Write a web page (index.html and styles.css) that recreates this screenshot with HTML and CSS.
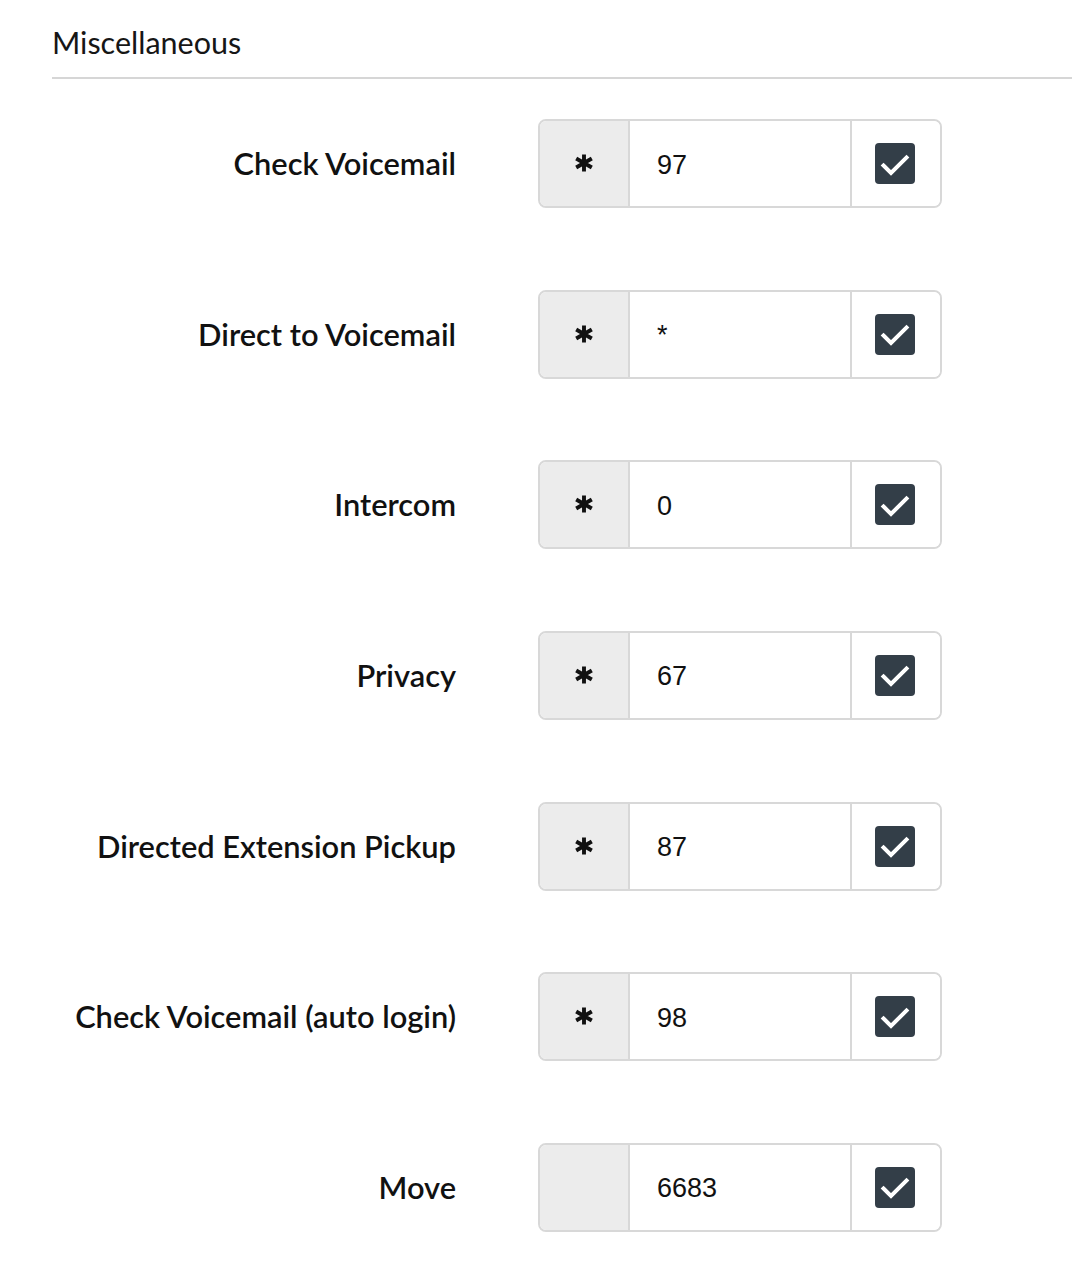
FILE: index.html
```html
<!DOCTYPE html>
<html>
<head>
<meta charset="utf-8">
<link rel="stylesheet" href="styles.css">
</head>
<body>
<div class="page">
  <h2 class="section-title">Miscellaneous</h2>
  <div class="rows">
    <div class="row">
      <label class="row-label">Check Voicemail</label>
      <div class="group">
        <span class="addon prefix"><svg class="star" viewBox="0 0 20 20"><path d="M10 1.5V18.5M2.2 5.5L17.8 14.5M2.2 14.5L17.8 5.5"/></svg></span>
        <span class="field">97</span>
        <span class="addon check"><span class="box"><svg viewBox="0 0 40 40"><path d="M8.5 21.5L16 29L31.5 13.5"/></svg></span></span>
      </div>
    </div>
    <div class="row">
      <label class="row-label">Direct to Voicemail</label>
      <div class="group">
        <span class="addon prefix"><svg class="star" viewBox="0 0 20 20"><path d="M10 1.5V18.5M2.2 5.5L17.8 14.5M2.2 14.5L17.8 5.5"/></svg></span>
        <span class="field">*</span>
        <span class="addon check"><span class="box"><svg viewBox="0 0 40 40"><path d="M8.5 21.5L16 29L31.5 13.5"/></svg></span></span>
      </div>
    </div>
    <div class="row">
      <label class="row-label">Intercom</label>
      <div class="group">
        <span class="addon prefix"><svg class="star" viewBox="0 0 20 20"><path d="M10 1.5V18.5M2.2 5.5L17.8 14.5M2.2 14.5L17.8 5.5"/></svg></span>
        <span class="field">0</span>
        <span class="addon check"><span class="box"><svg viewBox="0 0 40 40"><path d="M8.5 21.5L16 29L31.5 13.5"/></svg></span></span>
      </div>
    </div>
    <div class="row">
      <label class="row-label">Privacy</label>
      <div class="group">
        <span class="addon prefix"><svg class="star" viewBox="0 0 20 20"><path d="M10 1.5V18.5M2.2 5.5L17.8 14.5M2.2 14.5L17.8 5.5"/></svg></span>
        <span class="field">67</span>
        <span class="addon check"><span class="box"><svg viewBox="0 0 40 40"><path d="M8.5 21.5L16 29L31.5 13.5"/></svg></span></span>
      </div>
    </div>
    <div class="row">
      <label class="row-label">Directed Extension Pickup</label>
      <div class="group">
        <span class="addon prefix"><svg class="star" viewBox="0 0 20 20"><path d="M10 1.5V18.5M2.2 5.5L17.8 14.5M2.2 14.5L17.8 5.5"/></svg></span>
        <span class="field">87</span>
        <span class="addon check"><span class="box"><svg viewBox="0 0 40 40"><path d="M8.5 21.5L16 29L31.5 13.5"/></svg></span></span>
      </div>
    </div>
    <div class="row">
      <label class="row-label">Check Voicemail (auto login)</label>
      <div class="group">
        <span class="addon prefix"><svg class="star" viewBox="0 0 20 20"><path d="M10 1.5V18.5M2.2 5.5L17.8 14.5M2.2 14.5L17.8 5.5"/></svg></span>
        <span class="field">98</span>
        <span class="addon check"><span class="box"><svg viewBox="0 0 40 40"><path d="M8.5 21.5L16 29L31.5 13.5"/></svg></span></span>
      </div>
    </div>
    <div class="row">
      <label class="row-label">Move</label>
      <div class="group">
        <span class="addon prefix"></span>
        <span class="field">6683</span>
        <span class="addon check"><span class="box"><svg viewBox="0 0 40 40"><path d="M8.5 21.5L16 29L31.5 13.5"/></svg></span></span>
      </div>
    </div>
  </div>
</div>
</body>
</html>
```
FILE: styles.css
```css
html, body {
  margin: 0;
  padding: 0;
  background: #ffffff;
}
.page {
  padding: 22px 0 0 52px;
  font-family: Lato, "Noto Sans", sans-serif;
  color: #1a1a1a;
}
.section-title {
  margin: 0;
  font-size: 30.5px;
  font-weight: 400;
  line-height: 40px;
  padding-bottom: 15px;
  border-bottom: 2px solid #d6d6d6;
  color: #161616;
}
.rows {
  display: flex;
  flex-direction: column;
  gap: 81.67px;
  padding-top: 40px;
}
.row {
  display: flex;
  align-items: center;
}
.row-label {
  width: 404px;
  text-align: right;
  font-size: 30.8px;
  font-weight: 600;
  color: #111111;
}
.group {
  margin-left: 82px;
  width: 404px;
  height: 89px;
  display: flex;
  border: 2px solid #d8d8d8;
  border-radius: 8px;
  box-sizing: border-box;
  overflow: hidden;
}
.addon {
  flex: none;
  display: flex;
  align-items: center;
  justify-content: center;
  box-sizing: border-box;
}
.prefix {
  width: 90px;
  background: #ececec;
  border-right: 2px solid #d8d8d8;
  padding-bottom: 1px;
}
.check {
  width: 90px;
  border-left: 2px solid #d8d8d8;
  background: #fff;
  padding-right: 2px;
}
.star {
  width: 20px;
  height: 20px;
  fill: none;
  stroke: #111;
  stroke-width: 3.9;
}
.field {
  flex: 1;
  display: flex;
  align-items: center;
  padding-left: 27px;
  padding-top: 3px;
  font-family: "Liberation Sans", Arial, sans-serif;
  font-size: 27px;
  color: #111;
}
.box {
  width: 40px;
  height: 41px;
  border-radius: 4px;
  background: #333e48;
  display: flex;
  align-items: center;
}
.box svg {
  width: 40px;
  height: 40px;
  fill: none;
  stroke: #fff;
  stroke-width: 4;
  stroke-linecap: square;
}
```
